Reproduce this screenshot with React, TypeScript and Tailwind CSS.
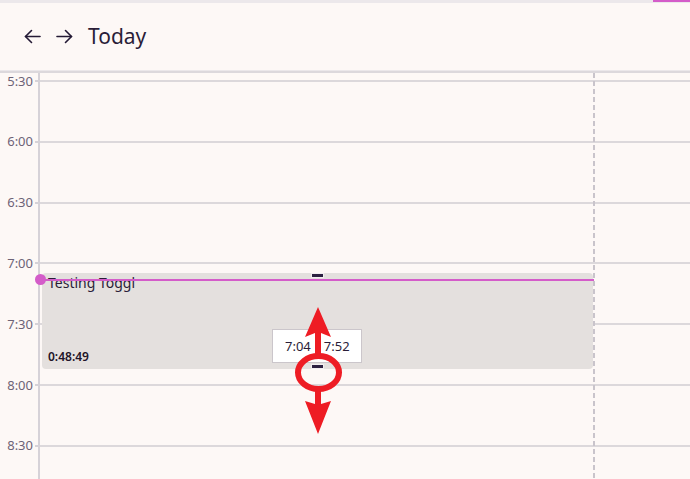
import React from "react";

const labels = ["5:30", "6:00", "6:30", "7:00", "7:30", "8:00", "8:30"];

function ArrowLeftIcon() {
  return (
    <svg width="17" height="15" viewBox="0 0 17 15" fill="none" stroke="#241a35" strokeWidth="1.6" strokeLinecap="round" strokeLinejoin="round">
      <path d="M16 7.5H1.5" />
      <path d="M7.5 1.5L1.5 7.5L7.5 13.5" />
    </svg>
  );
}

function ArrowRightIcon() {
  return (
    <svg width="17" height="15" viewBox="0 0 17 15" fill="none" stroke="#241a35" strokeWidth="1.6" strokeLinecap="round" strokeLinejoin="round">
      <path d="M1 7.5H15.5" />
      <path d="M9.5 1.5L15.5 7.5L9.5 13.5" />
    </svg>
  );
}

export default function App() {
  return (
    <div className="relative w-[690px] h-[479px] overflow-hidden bg-[#fdf8f6] font-['Noto_Sans',sans-serif] text-[#2a1d38]">
      {/* top strip */}
      <div className="flex h-[3px] bg-[#ece8eb]">
        <div className="flex-1" />
        <div className="w-[37px] h-[2px] bg-[#d45cc9]" />
      </div>
      {/* header */}
      <div className="flex h-[67px] items-center pl-[24px] bg-[#fdf8f6]">
        <div className="flex items-center gap-[15px]">
          <ArrowLeftIcon />
          <ArrowRightIcon />
        </div>
        <div className="ml-[15px] text-[21px] leading-none pb-[1px]">Today</div>
      </div>
      <div className="h-px bg-[#ebe7ea]" />
      <div className="h-[2px] bg-[#dcd8dc]" />

      {/* body */}
      <div className="flex h-[406px] overflow-hidden">
        {/* gutter */}
        <div className="w-[38px] shrink-0 flex flex-col">
          <div className="h-[7px] shrink-0" />
          {labels.map((l) => (
            <div key={l} className="h-[60.83px] shrink-0">
              <div className="-mt-[8px] h-[18px] flex items-center justify-end gap-[2px]">
                <span className="text-[13px] leading-none text-[#6d6376]">{l}</span>
                <span className="w-[3px] h-[2px] bg-[#d6d2d8]" />
              </div>
            </div>
          ))}
        </div>
        {/* main column */}
        <div className="relative flex-1 border-l-2 border-[#d6d2d8] flex flex-col">
          <div className="h-[7px] shrink-0" />
          {labels.map((l) => (
            <div key={l} className="h-[60.83px] shrink-0 border-t-2 border-[#dcd8db]" />
          ))}

          {/* dashed day divider */}
          <div className="absolute left-[553px] top-0 bottom-0 w-[1.5px] bg-[repeating-linear-gradient(to_bottom,#c9c4cb_0_5px,transparent_5px_8px)]" />

          {/* event */}
          <div className="absolute left-[2px] top-[200px] w-[551px] h-[96px] rounded-[4px] bg-[#e4e0de] flex flex-col justify-between pl-[6px] pb-[4px]">
            <div className="text-[14px] leading-[19px] text-[#2a1d38]">Testing Toggl</div>
            <div className="text-[12px] leading-[16px] font-semibold text-[#1e1428]">0:48:49</div>
          </div>

          {/* current time line */}
          <div className="absolute left-0 top-[206px] w-[554px] h-[1.5px] bg-[#d45cc9]" />
          <div className="absolute -left-[5px] top-[201px] w-[11px] h-[11px] rounded-full bg-[#d45cc9]" />

          {/* drag handles */}
          <div className="absolute left-[271px] top-[200px] w-[13px] h-[5px] border border-[#f1eef0] bg-[#2c2040]" />
          <div className="absolute left-[271px] top-[291px] w-[13px] h-[5px] border border-[#f1eef0] bg-[#2c2040]" />

          {/* tooltip */}
          <div className="absolute left-[232px] top-[256px] w-[90px] h-[34px] bg-white border border-[#cbc6cb] flex items-center pl-[12px] gap-[13px] text-[13px] leading-none text-[#2a1d38]">
            <span>7:04</span>
            <span>7:52</span>
          </div>
        </div>
      </div>

      {/* red annotation overlay */}
      <svg className="absolute left-0 top-0 pointer-events-none" width="690" height="479" viewBox="0 0 690 479">
        <polygon
          fill="#ee1c24"
          points="318,307 331,337 321,333 321,355 315,355 315,333 305,337"
        />
        <polygon
          fill="#ee1c24"
          points="315,389 315,404 305,401 318,434 331,401 321,404 321,389"
        />
        <ellipse cx="318.5" cy="372.5" rx="20.5" ry="16.5" fill="none" stroke="#ee1c24" strokeWidth="6" />
      </svg>
    </div>
  );
}
